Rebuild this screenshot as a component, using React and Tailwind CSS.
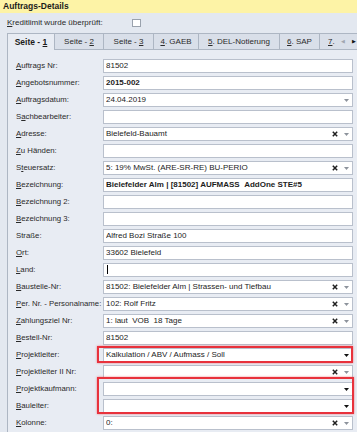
import React from "react";

const rows = [
  { label: "Auftrags Nr:", u: 0, value: "81502" },
  { label: "Angebotsnummer:", u: 0, value: "2015-002", bold: true },
  { label: "Auftragsdatum:", u: 0, value: "24.04.2019", kind: "d" },
  { label: "Sachbearbeiter:", u: 1, value: "" },
  { label: "Adresse:", u: 0, value: "Bielefeld-Bauamt", kind: "x" },
  { label: "Zu Händen:", u: 0, value: "" },
  { label: "Steuersatz:", u: 1, value: "5: 19% MwSt. (ARE-SR-RE) BU-PERIO", kind: "x" },
  { label: "Bezeichnung:", u: 0, value: "Bielefelder Alm | [81502] AUFMASS\u00a0\u00a0AddOne STE#5", bold: true },
  { label: "Bezeichnung 2:", u: 0, value: "" },
  { label: "Bezeichnung 3:", u: 0, value: "" },
  { label: "Straße:", u: -1, value: "Alfred Bozi Straße 100" },
  { label: "Ort:", u: 0, value: "33602 Bielefeld" },
  { label: "Land:", u: 0, value: "", cursor: true },
  { label: "Baustelle-Nr:", u: 0, value: "81502: Bielefelder Alm | Strassen- und Tiefbau", kind: "x" },
  { label: "Per. Nr. - Personalname:", u: 0, value: "102: Rolf Fritz", kind: "x" },
  { label: "Zahlungsziel Nr:", u: 0, value: "1: laut\u00a0\u00a0VOB\u00a0\u00a018 Tage", kind: "x" },
  { label: "Bestell-Nr:", u: 0, value: "81502" },
  { label: "Projektleiter:", u: 0, value: "Kalkulation / ABV / Aufmass / Soll", kind: "r" },
  { label: "Projektleiter II Nr:", u: 0, value: "", kind: "x" },
  { label: "Projektkaufmann:", u: 0, value: "", kind: "r" },
  { label: "Bauleiter:", u: 0, value: "", kind: "r" },
  { label: "Kolonne:", u: 0, value: "0:", kind: "x" },
  { label: "", u: -1, value: "", kind: "x" },
];

function Mnemonic({ text, u }) {
  if (u < 0) return <>{text}</>;
  return (
    <>
      {text.slice(0, u)}
      <span className="underline underline-offset-[1px] decoration-[0.5px]">{text[u]}</span>
      {text.slice(u + 1)}
    </>
  );
}

function Cross() {
  return (
    <svg width="6" height="6" viewBox="0 0 6 6" className="shrink-0">
      <path d="M0.8 0.8 L5.2 5.2 M5.2 0.8 L0.8 5.2" stroke="#1f1f1f" strokeWidth="1.5" />
    </svg>
  );
}

function Arrow({ dark }) {
  return (
    <svg width="5" height="3" viewBox="0 0 5 3" className="shrink-0">
      <path d="M0 0 L5 0 L2.5 3 Z" fill={dark ? "#111111" : "#8d939c"} />
    </svg>
  );
}

function Field({ row }) {
  return (
    <div className="flex h-[14px] w-[250px] items-center border border-[#b9c0cc] bg-white pl-[2px] pr-[3px]">
      <div
        className={
          "flex-1 truncate whitespace-nowrap leading-[12px] text-[#1c1c1c] " +
          (row.bold ? "font-bold text-[8px]" : "text-[8px]")
        }
      >
        {row.cursor ? <span className="ml-[1px] inline-block h-[9px] w-[1px] bg-black align-middle" /> : row.value}
      </div>
      {row.kind === "x" && (
        <div className="flex items-center gap-[6px]">
          <Cross />
          <Arrow />
        </div>
      )}
      {row.kind === "d" && <Arrow />}
      {row.kind === "r" && <Arrow dark />}
    </div>
  );
}

const tabs = [
  { pre: "Seite - ", key: "1", post: "", w: "w-[48px]", sel: true },
  { pre: "Seite - ", key: "2", post: "", w: "w-[49px]" },
  { pre: "Seite - ", key: "3", post: "", w: "w-[50px]" },
  { pre: "", key: "4", post: ". GAEB", w: "w-[45px]" },
  { pre: "", key: "5", post: ". DEL-Notierung", w: "w-[81px]" },
  { pre: "", key: "6", post: ". SAP", w: "w-[40px]" },
];

export default function App() {
  return (
    <div
      className="relative h-[432px] w-[357px] overflow-hidden bg-[#e3e8f0] text-[8px] text-[#222]"
      style={{ fontFamily: '"Liberation Sans", Arial, sans-serif' }}
    >
      <div className="flex h-[13px] items-center bg-[#fdf3a6] pl-[3px] text-[8.5px] font-bold text-[#1b1b1b]">
        Auftrags-Details
      </div>

      <div className="flex h-[20px] items-center pl-[7px]">
        <span className="w-[125px] text-[#2a2a2a]">
          <Mnemonic text="Kreditlimit wurde überprüft:" u={0} />
        </span>
        <span className="h-[8px] w-[9px] border border-[#9aa2ad] bg-white" />
      </div>

      <div className="relative flex h-[17px] pl-[7px]">
        {tabs.map((t, i) => (
          <div
            key={i}
            className={
              "flex h-full shrink-0 items-center justify-center border-r border-t border-[#adb6c3] " +
              t.w +
              " " +
              (i === 0 ? "border-l " : "") +
              (t.sel
                ? "bg-[#e8ecf3] font-bold text-[8.5px] text-[#1b1b1b]"
                : "border-b bg-[#d9dfe9] text-[#2a2a2a]")
            }
          >
            <span>
              {t.pre}
              <span className="underline underline-offset-[1px]">{t.key}</span>
              {t.post}
            </span>
          </div>
        ))}
        <div className="flex h-full flex-1 items-center border-b border-t border-[#adb6c3] bg-[#d9dfe9] pl-[8px] text-[#2a2a2a]">
          <span>
            <span className="underline underline-offset-[1px]">7</span>.
          </span>
          <span className="ml-[4px] w-[8px] text-center text-[5px] text-[#a0a6af]">◀</span>
          <span className="ml-[4px] w-[6px] text-center text-[5px] text-[#111]">▶</span>
        </div>
      </div>

      <div className="ml-[7px] h-[400px] border-l border-[#adb6c3] bg-[#e8ecf3] pl-[8px] pt-[9px]">
        <div className="relative flex flex-col gap-[3px]">
          {rows.map((row, i) => (
            <div key={i} className="flex h-[14px] items-center">
              <div className="w-[87px] shrink-0 whitespace-nowrap text-[7.8px] text-[#2a2a2a]">
                <Mnemonic text={row.label} u={row.u} />
              </div>
              <Field row={row} />
            </div>
          ))}
          <div className="pointer-events-none absolute left-[81px] top-[287px] h-[17px] w-[256px] border-2 border-[#e8323c] shadow-[0_0_2px_rgba(232,50,60,0.6)]" />
          <div className="pointer-events-none absolute left-[81px] top-[318px] h-[37px] w-[257px] border-2 border-[#e8323c] shadow-[0_0_2px_rgba(232,50,60,0.6)]" />
        </div>
      </div>
    </div>
  );
}
